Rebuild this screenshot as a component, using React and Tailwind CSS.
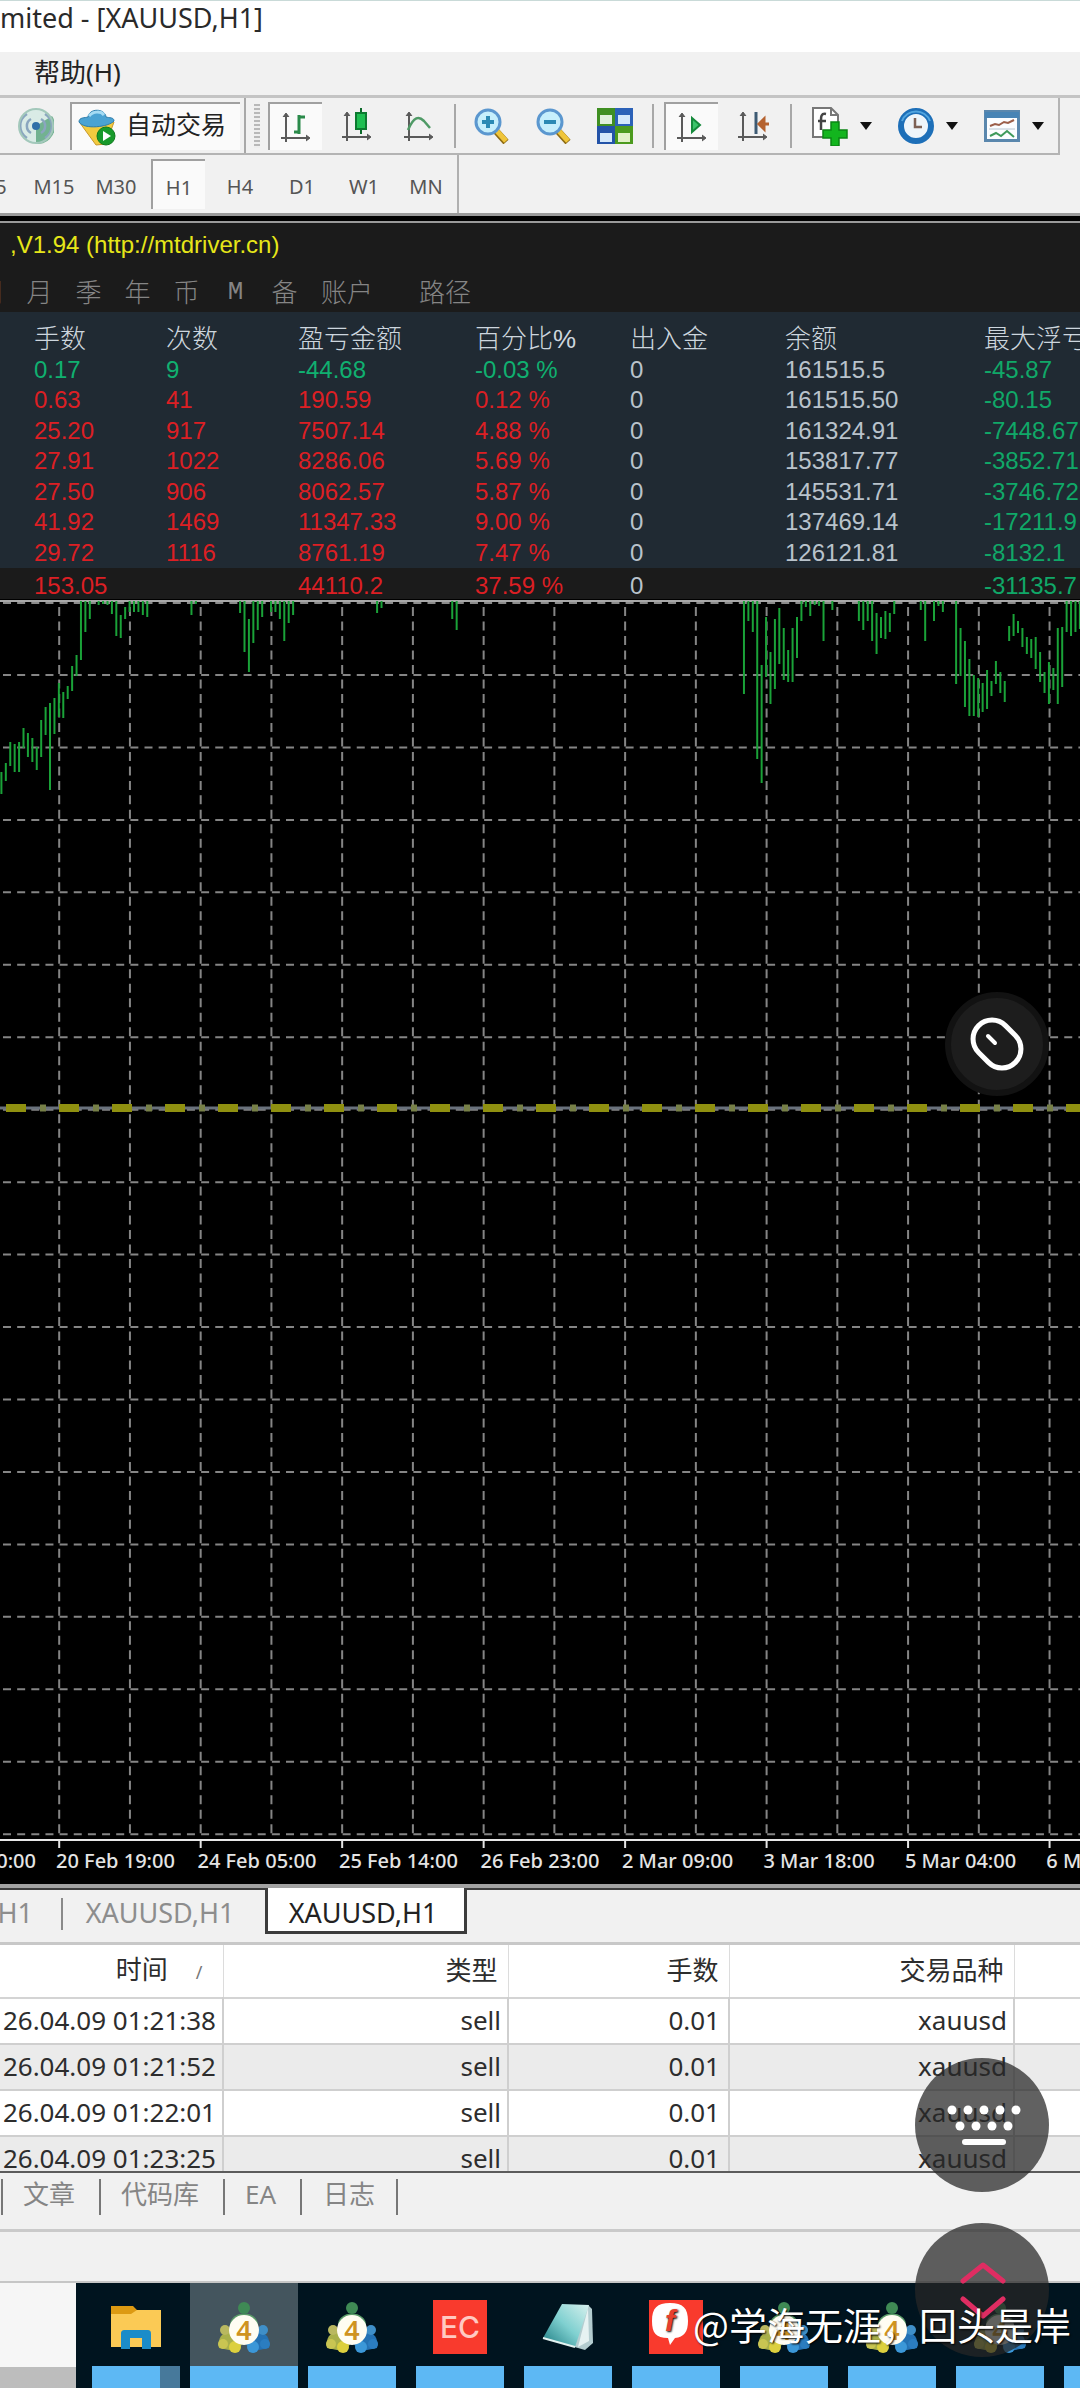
import { useState } from 'react'

const TIMEFRAMES = ['M5', 'M15', 'M30', 'H1', 'H4', 'D1', 'W1', 'MN']

const PANEL_TABS = ['周', '月', '季', '年', '币', 'M', '备']

const STAT_HEAD = ['手数', '次数', '盈亏金额', '百分比%', '出入金', '余额', '最大浮亏']

const STATS = [
  ['0.17', '9', '-44.68', '-0.03 %', '0', '161515.5', '-45.87'],
  ['0.63', '41', '190.59', '0.12 %', '0', '161515.50', '-80.15'],
  ['25.20', '917', '7507.14', '4.88 %', '0', '161324.91', '-7448.67'],
  ['27.91', '1022', '8286.06', '5.69 %', '0', '153817.77', '-3852.71'],
  ['27.50', '906', '8062.57', '5.87 %', '0', '145531.71', '-3746.72'],
  ['41.92', '1469', '11347.33', '9.00 %', '0', '137469.14', '-17211.9'],
  ['29.72', '1116', '8761.19', '7.47 %', '0', '126121.81', '-8132.1'],
]

const TOTAL = ['153.05', '', '44110.2', '37.59 %', '0', '', '-31135.7']

const ORDERS = ['26.04.09 01:21:38', '26.04.09 01:21:52', '26.04.09 01:22:01', '26.04.09 01:23:25']

const DATES = ['20 Feb 19:00', '24 Feb 05:00', '25 Feb 14:00', '26 Feb 23:00', '2 Mar 09:00', '3 Mar 18:00', '5 Mar 04:00', '6 Mar 13:00']

// [first bar index, [[high, low], ...]]
const RUNS = [
  [0, [[173, 195], [164, 182], [143, 167], [145, 173], [143, 173], [129, 149], [134, 158], [139, 163], [148, 171], [121, 158], [108, 136], [104, 191], [99, 135], [84, 118], [93, 119], [87, 100], [67, 92], [56, 77], [2, 61], [2, 33], [2, 20]]],
  [22, [[2, 6], [2, 5], [2, 6], [2, 15], [2, 37], [16, 39], [8, 20], [2, 13], [2, 13], [2, 13], [2, 16], [2, 18]]],
  [43, [[2, 16], [2, 5]]],
  [54, [[2, 14], [2, 53], [20, 73], [2, 44], [2, 31], [2, 18]]],
  [61, [[2, 13], [2, 13], [2, 20], [2, 42], [2, 24], [2, 16]]],
  [85, [[2, 14], [2, 9]]],
  [102, [[2, 20], [2, 31]]],
  [168, [[2, 95], [2, 22], [2, 33], [2, 160], [66, 184], [18, 78], [53, 105], [20, 90], [9, 65], [29, 81], [51, 83], [29, 83], [18, 59], [2, 22], [2, 8], [2, 17], [2, 6], [2, 7], [2, 42]]],
  [188, [[2, 11]]],
  [194, [[2, 22], [2, 31], [2, 22], [2, 42], [14, 55], [18, 39], [12, 40], [14, 33], [2, 15]]],
  [208, [[2, 11], [2, 42]]],
  [211, [[2, 22], [2, 7], [2, 13]]],
  [216, [[2, 85], [29, 77], [42, 108], [60, 117], [76, 117], [79, 118], [84, 113], [71, 110], [82, 97], [62, 85], [73, 94], [82, 103], [27, 42], [15, 37], [22, 34], [29, 48], [38, 55], [40, 59], [38, 70], [53, 83], [73, 94], [63, 105], [69, 91], [29, 105], [28, 88], [2, 33], [2, 37], [2, 33], [2, 30]]],
]

const BARS = RUNS.flatMap(([start, list]) => list.map(([a, b], i) => ({ x: 1.4 + (start + i) * 4.42, a, b })))

const COLS = Array.from({ length: 15 }, (_, i) => 59.2 + i * 70.74)
const ROWS = Array.from({ length: 17 }, (_, i) => 76 + i * 72.45)

function Axes({ children }) {
  return (
    <svg viewBox="0 0 36 36" className="w-9 h-9 shrink-0">
      <g stroke="#5a5a5a" strokeWidth="2" fill="none">
        <path d="M8 33V5M3 29h28" />
        <path d="M5 8l3-4 3 4M28 26l4 3-4 3" fill="#5a5a5a" strokeWidth="1" />
      </g>
      {children}
    </svg>
  )
}

function Magnifier({ plus }) {
  return (
    <svg viewBox="0 0 36 36" className="w-9 h-9">
      <path d="M23 23l10 11" stroke="#8d6a12" strokeWidth="7" />
      <path d="M23 22l10 11" stroke="#f0c53a" strokeWidth="5" />
      <circle cx="15" cy="14" r="12" fill="#c6effc" stroke="#5b97cf" strokeWidth="3" />
      <path d={plus ? 'M9 14h12M15 8v12' : 'M9 14h12'} stroke="#2b8ab4" strokeWidth="4" />
    </svg>
  )
}

function ToolButton({ label, pressed, children }) {
  return (
    <button
      aria-label={label}
      className={`w-[54px] h-12 flex items-center justify-center shrink-0 ${pressed ? 'bg-[#fafafa] border-t-2 border-l-2 border-[#a0a0a0]' : ''}`}
    >
      {children}
    </button>
  )
}

function MenuButton({ label, children }) {
  return (
    <button aria-label={label} className="w-[78px] h-12 pl-2.5 flex items-center gap-3 shrink-0">
      {children}
      <svg viewBox="0 0 12 8" className="w-3 h-2"><path d="M0 0h12L6 8z" fill="#111" /></svg>
    </button>
  )
}

function Toolbar() {
  return (
    <div className="h-[60px] border-t-3 border-[#c4c4c4] flex overflow-hidden">
      <div className="h-full flex items-center gap-2 pr-1.5 border-r-2 border-b-2 border-[#b4b4b4] shrink-0">
        <svg viewBox="0 0 36 36" className="w-9 h-9 ml-[18px] shrink-0">
          <circle cx="18" cy="18" r="17" fill="#d9ebe6" />
          <path d="M18 18v18A18 18 0 0 0 34 8z" fill="#4f9f74" opacity=".75" />
          <g fill="none" stroke="#8aa6bf" strokeWidth="2.5">
            <path d="M13 11a8 8 0 0 0 0 14M23 11a8 8 0 0 1 0 14" />
            <path d="M9 6a14 14 0 0 0 0 24M27 6a14 14 0 0 1 0 24" />
          </g>
          <circle cx="18" cy="18" r="17" fill="none" stroke="#a3c8bb" strokeWidth="2" />
          <circle cx="18" cy="18" r="4" fill="#2f6fa8" />
        </svg>

        <button className="w-[170px] h-12 ml-2 pl-1.5 flex items-center gap-2.5 bg-[#fafafa] border-t-2 border-l-2 border-[#a0a0a0] text-[25px] leading-[30px] text-[#222] whitespace-nowrap shrink-0">
          <svg viewBox="0 0 38 38" className="w-[38px] h-[38px] shrink-0">
            <path d="M2 15l34-1-8 22-10 1z" fill="#f3cb3f" stroke="#c9982a" />
            <path d="M1 14c0-5 6-4 9-5 1-9 17-9 18 0 3 1 8 0 8 4-5 6-30 9-35 1z" fill="#4ba3d3" stroke="#2c7cab" />
            <path d="M11 8c4-5 12-5 15-1" stroke="#a5dbf3" strokeWidth="3" fill="none" />
            <circle cx="28" cy="28" r="9" fill="#189a2b" stroke="#0e7a1d" />
            <path d="M25 23l8 5-8 5z" fill="#fff" />
          </svg>
          <span className="pb-1.5">自动交易</span>
        </button>

        <div className="-ml-1 w-0.5 h-full bg-[#a8a8a8]" />
        <div className="w-1.5 h-11 bg-[repeating-linear-gradient(#b8b8b8_0_2px,#eeeeee_2px_4px)]" />

        <ToolButton label="柱状图" pressed>
          <Axes><path d="M21 25V6M21 8h6M16 23h5" stroke="#2a8a4a" strokeWidth="3" fill="none" /></Axes>
        </ToolButton>
        <ToolButton label="阴阳烛">
          <Axes>
            <path d="M22 0v26" stroke="#0c6b2a" strokeWidth="2" />
            <rect x="17" y="5" width="10" height="16" fill="#1fbf52" stroke="#0c7a30" strokeWidth="2" />
          </Axes>
        </ToolButton>
        <ToolButton label="折线图">
          <Axes><path d="M7 22C13 8 18 8 23 13l6 7" stroke="#4f9a66" strokeWidth="2.5" fill="none" /></Axes>
        </ToolButton>
        <div className="w-0.5 h-11 bg-[#a8a8a8]" />
        <ToolButton label="放大"><Magnifier plus /></ToolButton>
        <ToolButton label="缩小"><Magnifier /></ToolButton>
        <ToolButton label="平铺窗口">
          <svg viewBox="0 0 36 36" className="w-9 h-9">
            <path d="M0 0h18v18H0z" fill="#3f8f22" /><path d="M18 0h18v18H18z" fill="#2c62b8" />
            <path d="M0 18h18v18H0z" fill="#2353a8" /><path d="M18 18h18v18H18z" fill="#4c9a1e" />
            <path d="M3 7h12v9H3z" fill="#dff0dc" /><path d="M21 25h12v9H21z" fill="#e2f1c8" />
            <path d="M21 7h12v9H21zM3 25h12v9H3z" fill="#d4e8fb" />
          </svg>
        </ToolButton>
        <div className="mx-0.5 w-0.5 h-11 bg-[#a8a8a8]" />
        <ToolButton label="自动滚动" pressed>
          <Axes><path d="M18 9l8 7-8 7z" fill="#3cc46a" stroke="#168a3c" strokeWidth="2" /></Axes>
        </ToolButton>
        <ToolButton label="图表平移">
          <Axes>
            <path d="M21 4v22" stroke="#3d5a73" strokeWidth="3" />
            <path d="M34 16h-6M29 11l-5 5 5 5z" fill="#b5622f" stroke="#b5622f" strokeWidth="3" />
          </Axes>
        </ToolButton>
        <div className="mx-0.5 w-0.5 h-11 bg-[#a8a8a8]" />
        <MenuButton label="指标">
          <svg viewBox="0 0 36 40" className="w-9 h-10">
            <path d="M1 2h18l7 7v22H1z" fill="#fff" stroke="#777" strokeWidth="2" />
            <path d="M19 2v7h7" fill="none" stroke="#777" strokeWidth="2" />
            <path d="M14 8c-5-1-5 3-5 6v10M6 15h8" fill="none" stroke="#444" strokeWidth="2.5" />
            <path d="M19 16h8v8h8v8h-8v8h-8v-8h-8v-8h8z" fill="#13b51e" stroke="#0b8514" strokeWidth="1.5" />
          </svg>
        </MenuButton>
        <MenuButton label="时间周期">
          <svg viewBox="0 0 36 36" className="w-9 h-9">
            <circle cx="18" cy="18" r="15" fill="#eef5fa" stroke="#1d6fb8" strokeWidth="6" />
            <path d="M4 13a15 15 0 0 1 28 0" fill="none" stroke="#52a5df" strokeWidth="2" />
            <path d="M17 10v9h7" fill="none" stroke="#7d6256" strokeWidth="2.5" />
          </svg>
        </MenuButton>
        <MenuButton label="模板">
          <svg viewBox="0 0 36 36" className="w-9 h-9">
            <rect x="1.5" y="3.5" width="33" height="29" fill="#fbfdff" stroke="#5a87ad" strokeWidth="3" />
            <path d="M1 4h34v6H1z" fill="#4884b5" />
            <path d="M6 18l5-2 4 1 5-3 4 1 6-3" fill="none" stroke="#9c5f4a" strokeWidth="2" />
            <path d="M5 21h26" stroke="#b8c6d2" />
            <path d="M6 28l6-3 5 3 6-5 7 6" fill="none" stroke="#3f9a5c" strokeWidth="2" />
          </svg>
        </MenuButton>
      </div>
    </div>
  )
}

function Chart() {
  return (
    <svg className="block w-full h-[1285px] bg-black" role="img" aria-label="XAUUSD H1">
      <g stroke="#858585" strokeWidth="2">
        {COLS.map((x) => <line key={x} x1={x} x2={x} y1="8" y2="1239" strokeDasharray="9 5.49" />)}
        {ROWS.map((y) => <line key={y} x1="3" x2="100%" y1={y} y2={y} strokeDasharray="8 6.15" />)}
      </g>
      <line x1="0" x2="100%" y1="2" y2="2" stroke="#a8a8a8" strokeWidth="2" />
      <line x1="3" x2="100%" y1="4" y2="4" stroke="#8b8b8b" strokeWidth="2" strokeDasharray="8 6.15" />
      <g stroke="#1aa238" strokeWidth="2">
        {BARS.map((b) => <line key={b.x} x1={b.x} x2={b.x} y1={b.a} y2={b.b} />)}
      </g>

      {/* 零轴 */}
      <line x1="0" x2="100%" y1="509" y2="509" stroke="#69717c" strokeWidth="3" />
      <line x1="6" x2="100%" y1="509" y2="509" stroke="#8f9010" strokeWidth="8" strokeDasharray="20 33" />
      <line x1="40" x2="100%" y1="509" y2="509" stroke="#778048" strokeWidth="7" strokeDasharray="6 47" />

      {/* 时间轴 */}
      <line x1="0" x2="100%" y1="1241" y2="1241" stroke="#e8e8e8" strokeWidth="2" />
      <g className="font-['Noto_Sans',sans-serif] text-[20px] font-medium" fill="#e4e4e4">
        <text x="36" y="1269" textAnchor="end">0:00</text>
        {DATES.map((d, i) => (
          <g key={d}>
            <rect x={58.2 + i * 141.48} y="1242" width="2" height="7" />
            <text x={56 + i * 141.48} y="1269">{d}</text>
          </g>
        ))}
      </g>
    </svg>
  )
}

function statColor(row, i) {
  if (i === 4 || i === 5) return 'text-[#b9c3cc]'
  if (i === 6) return 'text-[#10a868]'
  return row[2].startsWith('-') ? 'text-[#10b070]' : 'text-[#dc1f24]'
}

function StatsTable() {
  return (
    <table className="w-full table-fixed text-left text-[24px] leading-[30px] bg-[#202a33] whitespace-nowrap font-['Liberation_Sans','Noto_Sans_CJK_SC',sans-serif]">
      <colgroup>
        <col className="w-[166px]" /><col className="w-[132px]" /><col className="w-[177px]" /><col className="w-[155px]" />
        <col className="w-[155px]" /><col className="w-[199px]" /><col />
      </colgroup>
      <thead>
        <tr className="h-[42px]">
          {STAT_HEAD.map((h) => (
            <th key={h} className="p-0 pt-3 first:pl-[34px] font-light text-[26px] text-[#cdd6de]">{h}</th>
          ))}
        </tr>
      </thead>
      <tbody>
        {STATS.map((row) => (
          <tr key={row[0]} className="odd:h-[31px] even:h-[30px]">
            {row.map((v, i) => <td key={i} className={`p-0 first:pl-[34px] ${statColor(row, i)}`}>{v}</td>)}
          </tr>
        ))}
      </tbody>
      <tfoot>
        <tr className="h-[31px] leading-[27px] bg-[#1b1b1b]">
          {TOTAL.map((v, i) => (
            <td key={i} className={`p-0 pt-1 first:pl-[34px] ${statColor(TOTAL, i)}`}>{v}</td>
          ))}
        </tr>
      </tfoot>
    </table>
  )
}

function OrdersTable() {
  return (
    <div className="h-[228px] overflow-hidden bg-white border-b-2 border-[#5c5c5c]">
      <table className="w-full table-fixed text-right text-[26px] leading-[36px] text-[#2d2d2d] whitespace-nowrap">
        <colgroup>
          <col className="w-[223px]" /><col className="w-[285px]" /><col className="w-[221px]" /><col className="w-[285px]" /><col />
        </colgroup>
        <thead>
          <tr className="h-[53px] border-b-2 border-[#d4d4d4]">
            <th className="p-0 pr-5 pb-0.5 border-r border-[#dcdcdc] font-normal">
              时间<span className="pl-7 text-[18px] text-[#777]">/</span>
            </th>
            <th className="p-0 pr-2.5 pb-0.5 border-r border-[#dcdcdc] font-normal">类型</th>
            <th className="p-0 pr-2.5 pb-0.5 border-r border-[#dcdcdc] font-normal">手数</th>
            <th className="p-0 pr-2.5 pb-0.5 border-r border-[#dcdcdc] font-normal">交易品种</th>
            <th className="p-0"></th>
          </tr>
        </thead>
        <tbody>
          {ORDERS.map((time) => (
            <tr key={time} className="h-[46px] border-b-2 border-[#cfcfcf] even:bg-[#ebebeb]">
              <td className="p-0 pr-1.5 pb-0.5 border-r-2 border-[#cfcfcf]">{time}</td>
              <td className="p-0 pr-1.5 pb-0.5 border-r-2 border-[#cfcfcf]">sell</td>
              <td className="p-0 pr-2 pb-0.5 border-r-2 border-[#cfcfcf]">0.01</td>
              <td className="p-0 pr-1.5 pb-0.5 border-r-2 border-[#cfcfcf]">xauusd</td>
              <td className="p-0"></td>
            </tr>
          ))}
        </tbody>
      </table>
    </div>
  )
}

function Mt4Icon() {
  return (
    <svg viewBox="0 0 54 52" className="w-[54px] h-[52px]">
      <path d="M13 26c-2-18 30-18 28 0z" fill="#5a9a68" />
      <circle cx="27" cy="7" r="6" fill="#3f8a55" />
      <path d="M2 47c-3-15 12-21 20-14l4 10-9 7z" fill="#a9b04a" />
      <circle cx="8" cy="29" r="5" fill="#b9b860" />
      <circle cx="18" cy="46" r="6" fill="#dcd03e" />
      <circle cx="6" cy="43" r="5" fill="#c9c552" />
      <path d="M52 47c3-15-12-21-20-14l-4 10 9 7z" fill="#2472b4" />
      <circle cx="46" cy="29" r="5" fill="#3f8fc8" />
      <circle cx="36" cy="46" r="6" fill="#3b97d8" />
      <circle cx="48" cy="43" r="5" fill="#2b7dc0" />
      <circle cx="27" cy="29" r="15" fill="#fffdf2" />
      <text x="27" y="39" textAnchor="middle" fontSize="27" fontWeight="600" fill="#cf9320" className="font-['Noto_Sans',sans-serif]">4</text>
    </svg>
  )
}

function RedApp({ text }) {
  return (
    <div className="w-[54px] h-[54px] bg-[#f93a2d] flex items-center justify-center text-[30px] leading-none font-medium text-[#ffc9c2] font-['Inter',sans-serif]">
      {text}
    </div>
  )
}

function FolderIcon() {
  return (
    <svg viewBox="0 0 50 44" className="w-[50px] h-11">
      <path d="M0 1h22l5 5h22v8H0z" fill="#dd9a12" />
      <path d="M0 9h20l6-4h24v37H0z" fill="#fbca55" />
      <path d="M10 44V29c0-3 1-4 4-4h23c2 0 3 1 3 4v15h-9V33H19v11z" fill="#1b8cc9" />
    </svg>
  )
}

function NotepadIcon() {
  return (
    <svg viewBox="0 0 52 50" className="w-[52px] h-[50px]">
      <defs>
        <linearGradient id="page" x1="0" y1="1" x2="1" y2="0">
          <stop offset="0" stopColor="#1a7a80" /><stop offset=".5" stopColor="#7fd0d0" /><stop offset="1" stopColor="#d8f1ee" />
        </linearGradient>
      </defs>
      <path d="M46 3l4 4 1 34-8 7-14-4z" fill="#b4cdd0" />
      <path d="M20 2l27 1-14 42L1 36z" fill="url(#page)" />
      <path d="M46 6l1 33-11 6z" fill="#e6f2f2" />
      <path d="M1 36l32 9" stroke="#e3f3f1" strokeWidth="2" />
    </svg>
  )
}

const APPS = [
  { name: '文件资源管理器', icon: <FolderIcon /> },
  { name: 'MetaTrader 1', icon: <Mt4Icon />, active: true },
  { name: 'MetaTrader 2', icon: <Mt4Icon /> },
  { name: 'EC', icon: <RedApp text="EC" /> },
  { name: '记事本', icon: <NotepadIcon /> },
  { name: 'EC 2', icon: <RedApp text="" /> },
  { name: 'MetaTrader 3', icon: <Mt4Icon /> },
  { name: 'MetaTrader 4', icon: <Mt4Icon /> },
  { name: 'MetaTrader 5', icon: <Mt4Icon /> },
  { name: '更多', icon: null },
]

function Taskbar() {
  return (
    <div className="relative h-[105px] flex overflow-hidden bg-[#00141f]">
      <div className="w-[76px] shrink-0 bg-[#f6f6f6] border-b-[21px] border-[#bdbdbd]" />
      <div className="flex pl-1.5">
        {APPS.map((app, i) => (
          <button
            key={app.name}
            aria-label={app.name}
            className={`w-[108px] shrink-0 flex flex-col ${app.active ? 'bg-[#44555e]' : 'px-2.5'}`}
          >
            <span className="h-[83px] w-full pt-1 flex items-center justify-center">{app.icon}</span>
            <span className={`h-[22px] w-full bg-[#5db8f4] ${i === 0 ? 'border-r-20 border-[#47799b]' : ''}`} />
          </button>
        ))}
      </div>
    </div>
  )
}

function App() {
  const [period, setPeriod] = useState('H1')

  return (
    <div className="relative w-full overflow-hidden bg-[#f1f1f1] font-['Noto_Sans','Noto_Sans_CJK_SC',sans-serif]">

      {/* 标题栏 + 菜单 */}
      <header className="h-[52px] bg-white border-t border-[#c9dad8] text-[27px] leading-[34px] text-[#2a2a2a] whitespace-nowrap">
        mited - [XAUUSD,H1]
      </header>
      <nav className="h-[43px] pl-[34px] pb-1 flex items-center text-[26px] leading-[36px] text-[#222]">
        <button>帮助(H)</button>
      </nav>

      <Toolbar />

      {/* 时间周期 */}
      <div className="h-[58px] flex">
        <div className="-ml-[39px] flex items-center border-r-2 border-[#b0b0b0]">
          {TIMEFRAMES.map((t) => (
            <button
              key={t}
              onClick={() => setPeriod(t)}
              className="w-[62px] h-full px-1 py-1 flex text-[20px] text-[#555]"
            >
              <span className={`w-full h-full pt-1.5 flex items-center justify-center ${period === t ? 'bg-[#fafafa] border-t-2 border-l-2 border-[#a0a0a0]' : ''}`}>{t}</span>
            </button>
          ))}
        </div>
      </div>
      <div className="h-2.5 bg-black border-t-3 border-b-2 border-[#9a9a9a]" />

      {/* 统计面板 */}
      <section className="bg-[#1b1b1b]">
        <div className="h-11 pl-2.5 flex items-center text-[24px] text-[#e6e619] whitespace-nowrap font-['Liberation_Sans',sans-serif]">
          ,V1.94 (http://mtdriver.cn)
        </div>
        <div className="h-[45px] -ml-[34px] pt-1.5 flex items-center text-[26px] font-light text-[#858585] whitespace-nowrap">
          {PANEL_TABS.map((t) => (
            <button key={t} className={`w-[49px] ${t === 'M' ? "font-['Liberation_Mono',monospace]" : ''}`}>{t}</button>
          ))}
          <button className="pl-3 pr-3.5">账户</button>
          <button className="px-8">路径</button>
        </div>
        <StatsTable />
      </section>

      <Chart />

      {/* 图表标签 */}
      <div className="h-[61px] bg-[#f1f1f1] border-t-4 border-b-3 border-t-[#a2a2a2] border-b-[#c8c8c8]">
        <div className="h-[54px] flex items-start text-[27px] leading-[36px] text-[#8d8d8d] whitespace-nowrap">
          <button className="h-12 w-[61px] pr-7 flex justify-end items-center border-t-2 border-[#3c3c3c]">H1</button>
          <div className="h-12 pt-2 border-t-2 border-[#3c3c3c]"><div className="w-0.5 h-8 bg-[#8a8a8a]" /></div>
          <button className="h-12 w-[202px] pr-2 border-t-2 border-[#3c3c3c]">XAUUSD,H1</button>
          <button className="h-[46px] w-[202px] pt-1.5 pr-1.5 bg-white text-[#222] border-x-3 border-b-3 border-[#3c3c3c]">XAUUSD,H1</button>
          <div className="h-12 flex-1 border-t-2 border-[#3c3c3c]" />
        </div>
      </div>

      <OrdersTable />

      {/* 终端标签 */}
      <div className="h-[59px] pt-1.5 flex items-start border-b-3 border-[#cacaca] text-[26px] leading-[30px] text-[#858585] whitespace-nowrap">
        <button className="h-9 w-[98px] ml-px pb-1.5 pr-1 border-l-2 border-[#777]">文章</button>
        <button className="h-9 w-[124px] pb-1.5 pr-1 border-l-2 border-[#777]">代码库</button>
        <button className="h-9 w-[77px] pb-1.5 pr-1 border-l-2 border-[#777]">EA</button>
        <button className="h-9 w-[98px] pb-1.5 border-x-2 border-[#777]">日志</button>
      </div>
      <div className="h-[51px] border-b-2 border-[#c6c6c6]" />

      <Taskbar />

      {/* 悬浮按钮 */}
      <button aria-label="鼠标" className="absolute right-[31px] top-[992px] w-26 h-26 rounded-full bg-[#1d1d1d] border-[6px] border-[#121212] flex items-center justify-center">
        <svg viewBox="0 0 60 60" className="w-[60px] h-[60px]" fill="none" stroke="#fff" strokeLinecap="round">
          <rect x="11" y="4" width="38" height="52" rx="19" transform="rotate(-45 30 30)" strokeWidth="5" />
          <path d="M21 22l7 7" strokeWidth="4" />
        </svg>
      </button>
      <button aria-label="键盘" className="absolute right-[31px] top-[2058px] w-[134px] h-[134px] rounded-full bg-[#262626]/73">
        <svg viewBox="0 0 134 134" className="w-full h-full" fill="#fff">
          {[37, 53, 69, 85, 101].map((x) => <circle key={x} cx={x} cy="52" r="4.5" />)}
          {[45, 61, 77, 93].map((x) => <circle key={x} cx={x} cy="68" r="4.5" />)}
          <rect x="47" y="81" width="44" height="6" rx="3" />
        </svg>
      </button>
      <button aria-label="滚动" className="absolute right-[31px] top-[2223px] w-[134px] h-[134px] rounded-full bg-[#262626]/73">
        <svg viewBox="0 0 134 134" className="w-full h-full" fill="none" stroke="#df2d62" strokeWidth="5" strokeLinecap="round" strokeLinejoin="round">
          <path d="M48 58l20-16 20 16M48 76l20 17 20-17" />
        </svg>
      </button>

      {/* 水印 */}
      <div className="absolute right-[9px] bottom-[36px] flex items-center gap-1 text-[38px] leading-[56px] text-white whitespace-nowrap font-['Noto_Sans_CJK_SC',sans-serif] [text-shadow:1px_1px_2px_#000]">
        <svg viewBox="0 0 38 44" className="w-[38px] h-11">
          <path d="M19 1C32 1 37 6 37 19c0 11-4 16-13 17l-5 7-2-7C5 36 1 31 1 19 1 6 6 1 19 1z" fill="#fff" />
          <text x="19" y="29" textAnchor="middle" fontSize="30" fontWeight="700" fontStyle="italic" fill="#e8402f" className="font-['Liberation_Sans',sans-serif]">f</text>
        </svg>
        @学海无涯，回头是岸
      </div>
    </div>
  )
}

export default App
